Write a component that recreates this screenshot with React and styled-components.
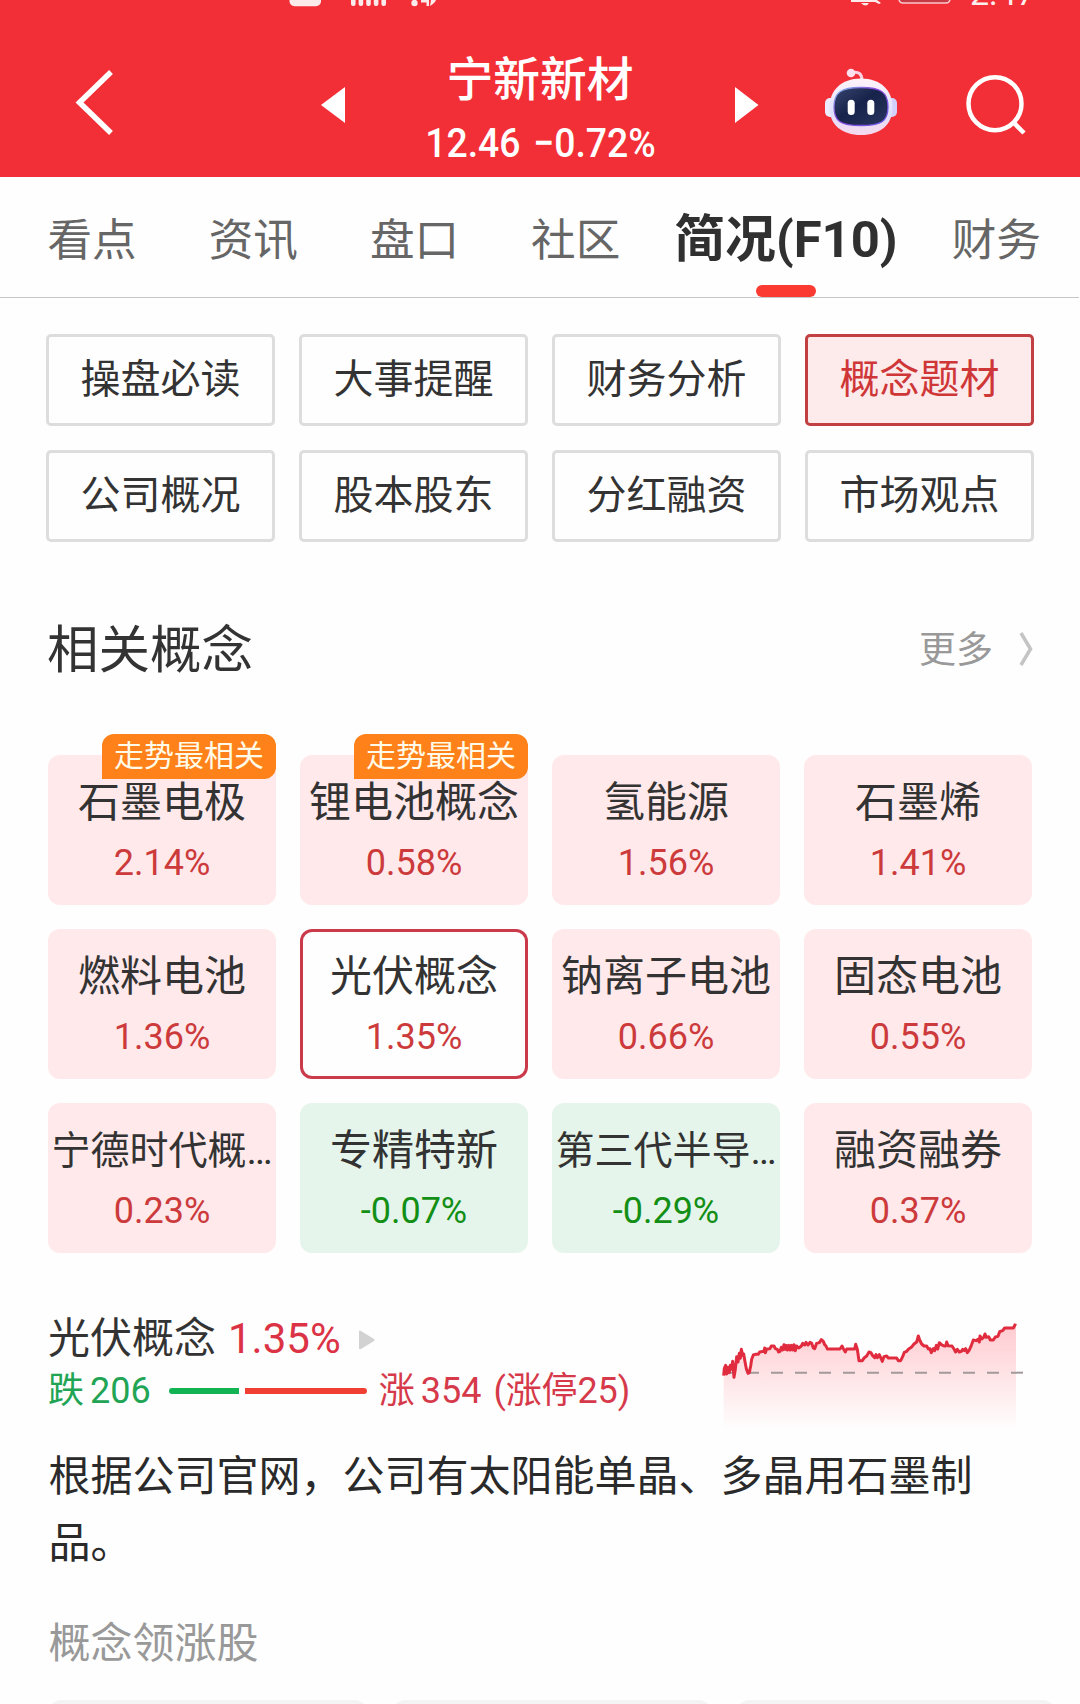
/*
Stock detail page, F10 tab -> related concepts
 todo:
  - hook up to the quotes feed
  - tab / card selection
*/

import React, { Component } from 'react'
import styled, { createGlobalStyle } from 'styled-components';

const tabs = ['看点', '资讯', '盘口', '社区', '简况(F10)', '财务'];
const activeTab = '简况(F10)';

const sections = [
  '操盘必读', '大事提醒', '财务分析', '概念题材',
  '公司概况', '股本股东', '分红融资', '市场观点'
];
const activeSection = '概念题材';

const concepts = [
  { name: '石墨电极', change: '2.14%', tag: '走势最相关' },
  { name: '锂电池概念', change: '0.58%', tag: '走势最相关' },
  { name: '氢能源', change: '1.56%' },
  { name: '石墨烯', change: '1.41%' },
  { name: '燃料电池', change: '1.36%' },
  { name: '光伏概念', change: '1.35%', selected: true },
  { name: '钠离子电池', change: '0.66%' },
  { name: '固态电池', change: '0.55%' },
  { name: '宁德时代概…', change: '0.23%', small: true },
  { name: '专精特新', change: '-0.07%', down: true },
  { name: '第三代半导…', change: '-0.29%', down: true, small: true },
  { name: '融资融券', change: '0.37%' }
];

// intraday trend, three units to a pixel
const trend = '71,257 73,235 77,226 80,252 84,232 88,248 91,226 95,238 98,214 102,262 106,238 110,200 114,216 118,190 121,205 124,178 128,196 131,192 135,215 139,236 144,250 148,248 152,228 155,208 160,195 166,193 175,193 179,186 192,184 194,174 196,188 200,177 210,176 214,168 222,168 226,176 232,178 236,186 240,184 244,172 248,180 252,164 255,178 258,166 262,180 266,166 270,180 274,166 278,180 282,164 286,182 290,168 296,174 304,168 308,160 314,165 318,157 324,165 330,157 335,160 340,174 344,176 350,160 358,158 364,149 370,154 374,164 378,168 382,177 420,177 426,168 430,176 436,186 440,177 464,177 467,163 472,178 477,212 487,212 493,203 500,198 507,186 513,188 518,197 524,203 528,194 532,203 538,194 547,214 552,200 560,198 565,204 590,204 595,212 602,212 608,200 613,187 620,184 626,177 634,172 642,162 650,156 655,138 659,150 665,162 672,168 680,168 685,177 690,176 694,188 700,176 704,182 709,166 713,177 718,158 724,164 732,168 737,168 740,156 744,167 756,168 762,177 767,186 772,178 778,186 784,184 788,178 793,182 797,176 802,188 808,180 814,166 820,150 828,152 834,148 838,156 840,138 845,147 851,142 855,132 859,142 866,140 871,150 880,150 886,141 894,139 899,125 908,122 914,114 940,114 945,105 946,101';

const GlobalStyle = createGlobalStyle`
  body {
    margin: 0;
    background: #fefefe;
    font-family: Roboto, 'Noto Sans CJK SC', sans-serif;
    color: #333;
  }
  * {
    box-sizing: border-box;
  }
`;

const Page = styled.div`
  width: 1080px;
  height: 1704px;
  overflow: hidden;
  background: #fefefe;
`;

const Header = styled.header`
  height: 177px;
  background: #f22f37;
  color: #fff;
`;

const StatusBar = styled.div`
  display: flex;
  align-items: flex-end;
  height: 7px;
  padding-left: 286px;
`;

const Clock = styled.span`
  margin: 0 0 -3px 9px;
  font-size: 34px;
  line-height: 34px;
  color: #fdeeee;
`;

const NavBar = styled.div`
  display: grid;
  grid-template-columns: 321px 24px 390px 24px 1fr;
  height: 170px;
`;

const BackIcon = styled.svg`
  margin: 60px 0 0 72px;
`;

const Arrow = styled.svg`
  margin-top: 80px;
`;

const StockTitle = styled.div`
  display: flex;
  flex-direction: column;
  align-items: center;
`;

const StockName = styled.h1`
  margin: 43px 0 0;
  font-size: 46.8px;
  font-weight: 500;
  line-height: 60px;
`;

// the quote digits are slightly condensed
const StockPrice = styled.div`
  display: flex;
  gap: 14px;
  margin-top: 9px;
  padding-left: 2px;
  font-size: 41px;
  font-weight: 500;
  line-height: 48px;
  white-space: nowrap;
  transform: scaleX(0.91);
`;

const Actions = styled.div`
  display: flex;
  padding: 57px 0 0 64px;
  gap: 63px;
`;

const Tabs = styled.nav`
  display: flex;
  gap: 36px;
  width: 1079px;
  height: 121px;
  padding-left: 29.5px;
  overflow: hidden;
  border-bottom: 1px solid #c6c6c6;
`;

const Tab = styled.div`
  display: flex;
  flex: none;
  flex-direction: column;
  align-items: center;
  justify-content: space-between;
  padding: ${props => props.$active ? '23px 0 0' : '24px 18px 0'};
  font-size: ${props => props.$active ? '50.8px' : '44.6px'};
  font-weight: ${props => props.$active ? 700 : 400};
  line-height: 80px;
  color: ${props => props.$active ? '#303030' : '#666'};
`;

const TabMark = styled.span`
  width: 60px;
  height: 12px;
  border-radius: 6px;
  background: #fb3a32;
`;

const SectionGrid = styled.div`
  display: grid;
  grid-template-columns: repeat(4, 229px);
  gap: 24px;
  padding: 36px 0 0 46px;
`;

const SectionButton = styled.button`
  height: 92px;
  padding: 0 0 8px;
  border: 3px solid ${props => props.$active ? '#c23f42' : '#ddd'};
  border-radius: 5px;
  background: ${props => props.$active ? '#fdeaea' : '#fefefe'};
  color: ${props => props.$active ? '#cf3638' : '#333'};
  font-family: inherit;
  font-size: 40px;
`;

const SectionHead = styled.div`
  display: flex;
  align-items: center;
  justify-content: space-between;
  height: 80px;
  margin: 67px 46px 0 47px;
`;

const SectionTitle = styled.h2`
  margin: 0 0 7px;
  font-size: 51.5px;
  font-weight: 400;
`;

const More = styled.div`
  display: flex;
  align-items: center;
  gap: 25px;
  font-size: 37px;
  color: #999;
`;

const MoreText = styled.span`
  margin-bottom: 4px;
`;

const ConceptGrid = styled.div`
  display: grid;
  grid-template-columns: repeat(4, 228px);
  gap: 24px;
  padding: 66px 0 0 48px;
`;

const ConceptCard = styled.div`
  position: relative;
  display: flex;
  flex-direction: column;
  align-items: center;
  height: 150px;
  padding-top: 18px;
  border-radius: 12px;
  background: ${props => props.$selected ? '#fefefe' : props.$down ? '#e6f5eb' : '#ffe9eb'};
  box-shadow: ${props => props.$selected ? 'inset 0 0 0 3px #cb3a4a' : 'none'};
`;

const ConceptName = styled.div`
  height: 60px;
  font-size: ${props => props.$small ? '39px' : '42px'};
  line-height: 60px;
  white-space: nowrap;
`;

const ConceptChange = styled.div`
  margin-top: 8px;
  font-size: 36px;
  line-height: 44px;
  color: ${props => props.$down ? '#138f16' : '#cc3a3c'};
`;

const ConceptTag = styled.span`
  position: absolute;
  top: -21px;
  right: 0;
  width: 174px;
  height: 45px;
  border-radius: 12px 12px 12px 0;
  background: #ff8119;
  color: #fffbe8;
  font-size: 30px;
  line-height: 43px;
  text-align: center;
`;

const Detail = styled.section`
  display: flex;
  justify-content: space-between;
  height: 132px;
  margin: 51px 56px 0 48px;
`;

const DetailTitle = styled.div`
  display: flex;
  align-items: center;
  height: 66px;
  font-size: 42px;
`;

const DetailName = styled.span`
  margin-bottom: 5px;
`;

const DetailChange = styled.span`
  margin: 2px 17px 0 12px;
  color: #db3345;
`;

const DetailArrow = styled.svg`
  margin-top: 5px;
`;

const Breadth = styled.div`
  display: flex;
  align-items: center;
  height: 42px;
  font-size: 36px;
  line-height: 40px;
`;

const Count = styled.span`
  display: flex;
  gap: 6px;
  color: ${props => props.$down ? '#22a455' : '#d63a4a'};
`;

const LimitUp = styled.span`
  margin-left: 6px;
  letter-spacing: -0.1px;
`;

const BreadthBar = styled.span`
  width: ${props => props.$width}px;
  height: 6px;
  margin-left: ${props => props.$down ? 18 : 6}px;
  margin-right: ${props => props.$down ? 0 : 12}px;
  border-radius: ${props => props.$down ? '3px 0 0 3px' : '0 3px 3px 0'};
  background: ${props => props.$down ? '#12b352' : '#f04034'};
`;

const Reason = styled.p`
  width: 960px;
  margin: 7px 0 0 48.5px;
  font-size: 42px;
  line-height: 67px;
  color: #2a2a2a;
`;

const LeadersTitle = styled.h3`
  margin: 37px 0 0 48.5px;
  font-size: 42px;
  font-weight: 400;
  line-height: 60px;
  color: #999;
`;

const Leaders = styled.div`
  display: flex;
  gap: 24px;
  padding: 26px 0 0 48px;
`;

const LeaderCard = styled.div`
  flex: none;
  width: 320px;
  height: 120px;
  border-radius: 14px;
  background: #f4f4f4;
`;

const StatusIcons = () => (
  <svg width="675" height="7" viewBox="286 0 675 7" fill="#fdeaea">
    <rect x="289.5" y="-10" width="31.5" height="16.3" rx="5" />
    {[351, 358.6, 366.2, 373.8, 381.4].map(x => (
      <rect key={x} x={x} y="-6" width="4.6" height="12" rx="2" />
    ))}
    <circle cx="414.5" cy="3" r="3.2" />
    <path d="M421 0h8v6h-2.500v-3.500h-5.500zM430 6l1-6h5q-1 3-6 6z" />
    <path d="M851 0h26l4 3-2 1-4-2h-24zM861 3h8q-3 5-8 0z" />
    <rect x="899" y="-12" width="51" height="15" rx="4" fill="#c53a44" stroke="#fbc9cc" strokeWidth="1.6" />
  </svg>
);

const RobotIcon = () => (
  <svg width="76" height="74" viewBox="823 64 76 74">
    <defs>
      <linearGradient id="shell" x1="0" y1="0" x2="0" y2="1">
        <stop offset="0" stopColor="#fff3fa" />
        <stop offset="0.6" stopColor="#dfe0fb" />
        <stop offset="1" stopColor="#f6d9ee" />
      </linearGradient>
      <linearGradient id="rim" x1="0" y1="0" x2="1" y2="1">
        <stop offset="0" stopColor="#7fc3ee" />
        <stop offset="0.4" stopColor="#8b46d8" />
        <stop offset="1" stopColor="#6a5be6" />
      </linearGradient>
      <linearGradient id="visor" x1="0" y1="0" x2="1" y2="1">
        <stop offset="0" stopColor="#39456f" />
        <stop offset="0.45" stopColor="#17234a" />
        <stop offset="1" stopColor="#2b3560" />
      </linearGradient>
    </defs>
    <path d="M852 72.500q10-2 10 8" fill="none" stroke="#fbd3e3" strokeWidth="3" />
    <circle cx="851" cy="73" r="4.300" fill="#fde0ee" />
    <rect x="825" y="98" width="12" height="19" rx="5" fill="#ecebff" />
    <rect x="885" y="98" width="12" height="19" rx="5" fill="#d3d1fb" />
    <path d="M861 78.500c20 0 31.500 12 31.500 29s-12 27.500-31.500 27.500-31.500-10.500-31.500-27.500 11.500-29 31.500-29z" fill="url(#shell)" />
    <path d="M861 87.500c20 0 27 5 27 19.500s-7 18.500-27 18.500-27-4-27-18.500 7-19.500 27-19.500z" fill="url(#visor)" stroke="url(#rim)" strokeWidth="1.300" />
    <rect x="847.700" y="99.700" width="7" height="15.300" rx="3.500" fill="#fff" />
    <rect x="867.300" y="99.700" width="7" height="15.300" rx="3.500" fill="#fff" />
  </svg>
);

const SearchSvg = styled.svg`
  margin-top: 7px;
`;

const SearchIcon = () => (
  <SearchSvg width="66" height="66" viewBox="962 71 66 66" fill="none" stroke="#fff" strokeWidth="4.500">
    <circle cx="995" cy="103.700" r="26.500" />
    <path d="M1013.500 122.500l10.500 10.500" />
  </SearchSvg>
);

const TrendChart = () => (
  <svg width="304" height="132" viewBox="60 42 912 396">
    <defs>
      <linearGradient id="fade" x1="0" y1="110" x2="0" y2="420" gradientUnits="userSpaceOnUse">
        <stop offset="0" stopColor="#ffccd1" />
        <stop offset="1" stopColor="#fefefe" />
      </linearGradient>
    </defs>
    <polygon points={`71,420 ${trend} 948,101 948,420`} fill="url(#fade)" />
    <path d="M69 248H972" stroke="#a3989a" strokeWidth="6" strokeDasharray="36 36" />
    <polyline points={trend} fill="none" stroke="#e02c3e" strokeWidth="9" strokeLinejoin="round" />
  </svg>
);

export default class App extends Component {
  render() {
    return (
      <Page>
        <GlobalStyle />
        <Header>
          <StatusBar>
            <StatusIcons />
            <Clock>2:47</Clock>
          </StatusBar>
          <NavBar>
            <BackIcon width="48" height="72" viewBox="72 67 48 72" fill="none" stroke="#fff" strokeWidth="5.500">
              <path d="M111 72L79.500 102.500 111 133" />
            </BackIcon>
            <Arrow width="24" height="36" fill="#fff"><path d="M24 0v36L0 18z" /></Arrow>
            <StockTitle>
              <StockName>宁新新材</StockName>
              <StockPrice>
                <span>12.46</span>
                <span>−0.72%</span>
              </StockPrice>
            </StockTitle>
            <Arrow width="24" height="36" fill="#fff"><path d="M0 0v36l23.500-18z" /></Arrow>
            <Actions>
              <RobotIcon />
              <SearchIcon />
            </Actions>
          </NavBar>
        </Header>
        <Tabs>
          {tabs.map(tab => (
            <Tab key={tab} $active={tab === activeTab}>
              {tab}
              {tab === activeTab && <TabMark />}
            </Tab>
          ))}
        </Tabs>
        <SectionGrid>
          {sections.map(name => (
            <SectionButton key={name} $active={name === activeSection}>{name}</SectionButton>
          ))}
        </SectionGrid>
        <SectionHead>
          <SectionTitle>相关概念</SectionTitle>
          <More>
            <MoreText>更多</MoreText>
            <svg width="16" height="36" fill="none" stroke="#c4c4c4" strokeWidth="3.500">
              <path d="M3 2l9.500 16L3 34" />
            </svg>
          </More>
        </SectionHead>
        <ConceptGrid>
          {concepts.map(({ name, change, tag, selected, down, small }) => (
            <ConceptCard key={name} $selected={selected} $down={down}>
              {tag && <ConceptTag>{tag}</ConceptTag>}
              <ConceptName $small={small}>{name}</ConceptName>
              <ConceptChange $down={down}>{change}</ConceptChange>
            </ConceptCard>
          ))}
        </ConceptGrid>
        <Detail>
          <div>
            <DetailTitle>
              <DetailName>光伏概念</DetailName>
              <DetailChange>1.35%</DetailChange>
              <DetailArrow width="18" height="20" fill="#d2d2d2">
                <path d="M1 1.500q0-1.500 2-.500l13 8q1.500 1 0 2l-13 8q-2 1-2-1z" />
              </DetailArrow>
            </DetailTitle>
            <Breadth>
              <Count $down><span>跌</span><span>206</span></Count>
              <BreadthBar $down $width={70} />
              <BreadthBar $width={122} />
              <Count>
                <span>涨</span>
                <span>354</span>
                <LimitUp>(涨停25)</LimitUp>
              </Count>
            </Breadth>
          </div>
          <TrendChart />
        </Detail>
        <Reason>根据公司官网，公司有太阳能单晶、多晶用石墨制品。</Reason>
        <LeadersTitle>概念领涨股</LeadersTitle>
        <Leaders>
          <LeaderCard />
          <LeaderCard />
          <LeaderCard />
        </Leaders>
      </Page>
    )
  }
}
